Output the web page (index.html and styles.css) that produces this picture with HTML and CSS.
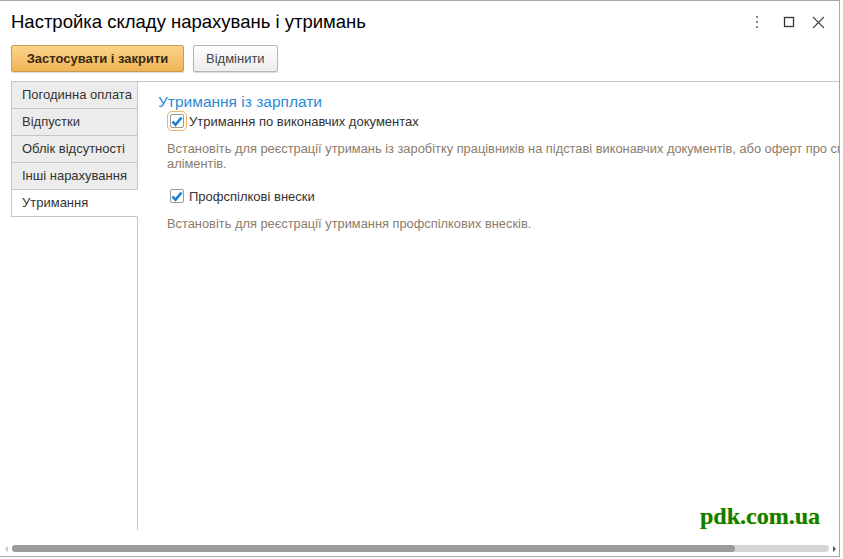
FILE: index.html
```html
<!DOCTYPE html>
<html lang="uk">
<head>
  <meta charset="UTF-8"/>
  <title>Настройка складу нарахувань і утримань</title>
  <link rel="stylesheet" href="styles.css">
</head>
<body>
  <div class="window">

    <!-- Title -->
    <div class="titlebar">
      <h1>Настройка складу нарахувань і утримань</h1>
      <div class="win-tools">
        <svg width="6" height="14" viewBox="0 0 6 14"><rect x="2" y="1" width="2" height="2" fill="#888"/><rect x="2" y="6" width="2" height="2" fill="#888"/><rect x="2" y="11" width="2" height="2" fill="#888"/></svg>
        <svg width="12" height="12" viewBox="0 0 12 12"><rect x="1.5" y="1.5" width="9" height="9" fill="none" stroke="#333" stroke-width="1.3"/></svg>
        <svg width="13" height="13" viewBox="0 0 13 13"><path d="M1 1 L12 12 M12 1 L1 12" stroke="#444" stroke-width="1.1"/></svg>
      </div>
    </div>

    <!-- Buttons -->
    <div class="toolbar">
      <button class="btn btn-primary">Застосувати і закрити</button>
      <button class="btn">Відмінити</button>
    </div>

    <!-- Tabs and page -->
    <div class="form">
      <div class="tabs">
        <div class="tab">Погодинна оплата</div>
        <div class="tab">Відпустки</div>
        <div class="tab">Облік відсутності</div>
        <div class="tab">Інші нарахування</div>
        <div class="tab active">Утримання</div>
        <div class="tabs-rest"></div>
      </div>
      <div class="page">
        <h2>Утримання із зарплати</h2>

        <label class="check focused">
          <span class="box"><svg width="12" height="11" viewBox="0 0 12 11"><path d="M1.5 5.5 L4.5 8.8 L10.5 1.5" fill="none" stroke="#1a7fd0" stroke-width="2.6"/></svg></span>
          Утримання по виконавчих документах
        </label>
        <p class="hint">Встановіть для реєстрації утримань із заробітку працівників на підставі виконавчих документів, або оферт про сплату аліментів.</p>

        <label class="check">
          <span class="box"><svg width="12" height="11" viewBox="0 0 12 11"><path d="M1.5 5.5 L4.5 8.8 L10.5 1.5" fill="none" stroke="#1a7fd0" stroke-width="2.6"/></svg></span>
          Профспілкові внески
        </label>
        <p class="hint">Встановіть для реєстрації утримання профспілкових внесків.</p>
      </div>
    </div>

    <!-- Horizontal scroll -->
    <div class="hscroll">
      <span class="arrow left"></span>
      <div class="track"><div class="thumb"></div></div>
      <span class="arrow right"></span>
    </div>

    <div class="watermark">pdk.com.ua</div>
  </div>
</body>
</html>
```

FILE: styles.css
```css
body{
  margin: 0;
  background: #fff;
  font-family: "Liberation Sans", Arial, sans-serif;
  color: #333;
}
.window{
  position: relative;
  width: 840px;
  height: 557px;
  box-sizing: border-box;
  border-top: 1px solid #a8a8a8;
  border-right: 1px solid #a8a8a8;
  border-bottom: 1px solid #a8a8a8;
  background: #fff;
  overflow: hidden;
}
.titlebar{
  display: flex;
  align-items: center;
  justify-content: space-between;
  height: 42px;
  padding: 0 14px 0 11px;
}
h1{
  margin: 0;
  font-size: 18.5px;
  font-weight: normal;
  color: #000;
}
.win-tools{
  display: flex;
  align-items: center;
}
.win-tools svg{
  display: block;
}
.win-tools svg:nth-child(1){ margin-right: 23px; }
.win-tools svg:nth-child(2){ margin-right: 17px; }

.toolbar{
  display: flex;
  gap: 9px;
  padding: 2px 11px 0;
  height: 36px;
}
.btn{
  height: 27px;
  padding: 0 12px;
  font-family: "Liberation Sans", Arial, sans-serif;
  font-size: 13px;
  color: #444;
  background: linear-gradient(#fefefe, #ececec);
  border: 1px solid #b5b5b5;
  border-radius: 2px;
  box-shadow: 0 1px 1px rgba(0,0,0,0.15);
}
.btn-primary{
  width: 173px;
  font-weight: bold;
  color: #3a2a10;
  background: linear-gradient(#fbd48a, #f1b456);
  border-color: #c99a52;
}

.form{
  display: flex;
  height: 449px;
  margin-left: 11px;
}
.tabs{
  width: 127px;
  display: flex;
  flex-direction: column;
  flex-shrink: 0;
}
.tab{
  height: 27px;
  box-sizing: border-box;
  padding-left: 10px;
  line-height: 26px;
  font-size: 13px;
  color: #333;
  background: #ececec;
  border: 1px solid #c6c6c6;
  border-bottom: none;
}
.tab.active{
  height: 28px;
  background: #fff;
  border-right-color: #fff;
  border-bottom: 1px solid #c6c6c6;
}
.tabs-rest{
  flex: 1;
  border-right: 1px solid #c6c6c6;
}
.page{
  flex: 1;
  border-top: 1px solid #c6c6c6;
  padding: 10px 0 0 20px;
  overflow: hidden;
}
h2{
  margin: 0;
  font-size: 15.5px;
  font-weight: normal;
  color: #2a8ad4;
  line-height: 19px;
}
.check{
  display: flex;
  align-items: center;
  gap: 5px;
  margin-left: 9px;
  height: 20px;
  font-size: 13px;
  color: #333;
}
.box{
  width: 14px;
  height: 14px;
  box-sizing: border-box;
  border: 1px solid #9a9a9a;
  border-radius: 2px;
  background: #fff;
  display: flex;
  align-items: center;
  justify-content: center;
  margin: 0 0 0 3px;
}
.check.focused .box{
  outline: 1px solid #f0b060;
  outline-offset: 2px;
}
.hint{
  width: 712px;
  margin: 10px 0 15px 9px;
  font-size: 12.85px;
  line-height: 15px;
  color: #8a7d6c;
}

.hscroll{
  display: flex;
  align-items: center;
  height: 17px;
  margin-top: 10px;
  padding: 0 3px 0 5px;
  gap: 4px;
}
.arrow{
  width: 0;
  height: 0;
  border-top: 3px solid transparent;
  border-bottom: 3px solid transparent;
}
.arrow.left{ border-right: 3px solid #c8c8c8; }
.arrow.right{ border-left: 3px solid #555; }
.track{
  flex: 1;
  height: 7px;
  border-radius: 4px;
  background: #d6d6d6;
}
.thumb{
  width: 723px;
  height: 7px;
  border-radius: 4px;
  background: #9b9b9b;
}

.watermark{
  position: absolute;
  left: 700px;
  top: 502px;
  font-family: "Liberation Serif", "Times New Roman", serif;
  font-weight: bold;
  font-size: 24px;
  color: #0a7f0a;
  text-shadow: 0 0 1px #d8c200;
}
```
